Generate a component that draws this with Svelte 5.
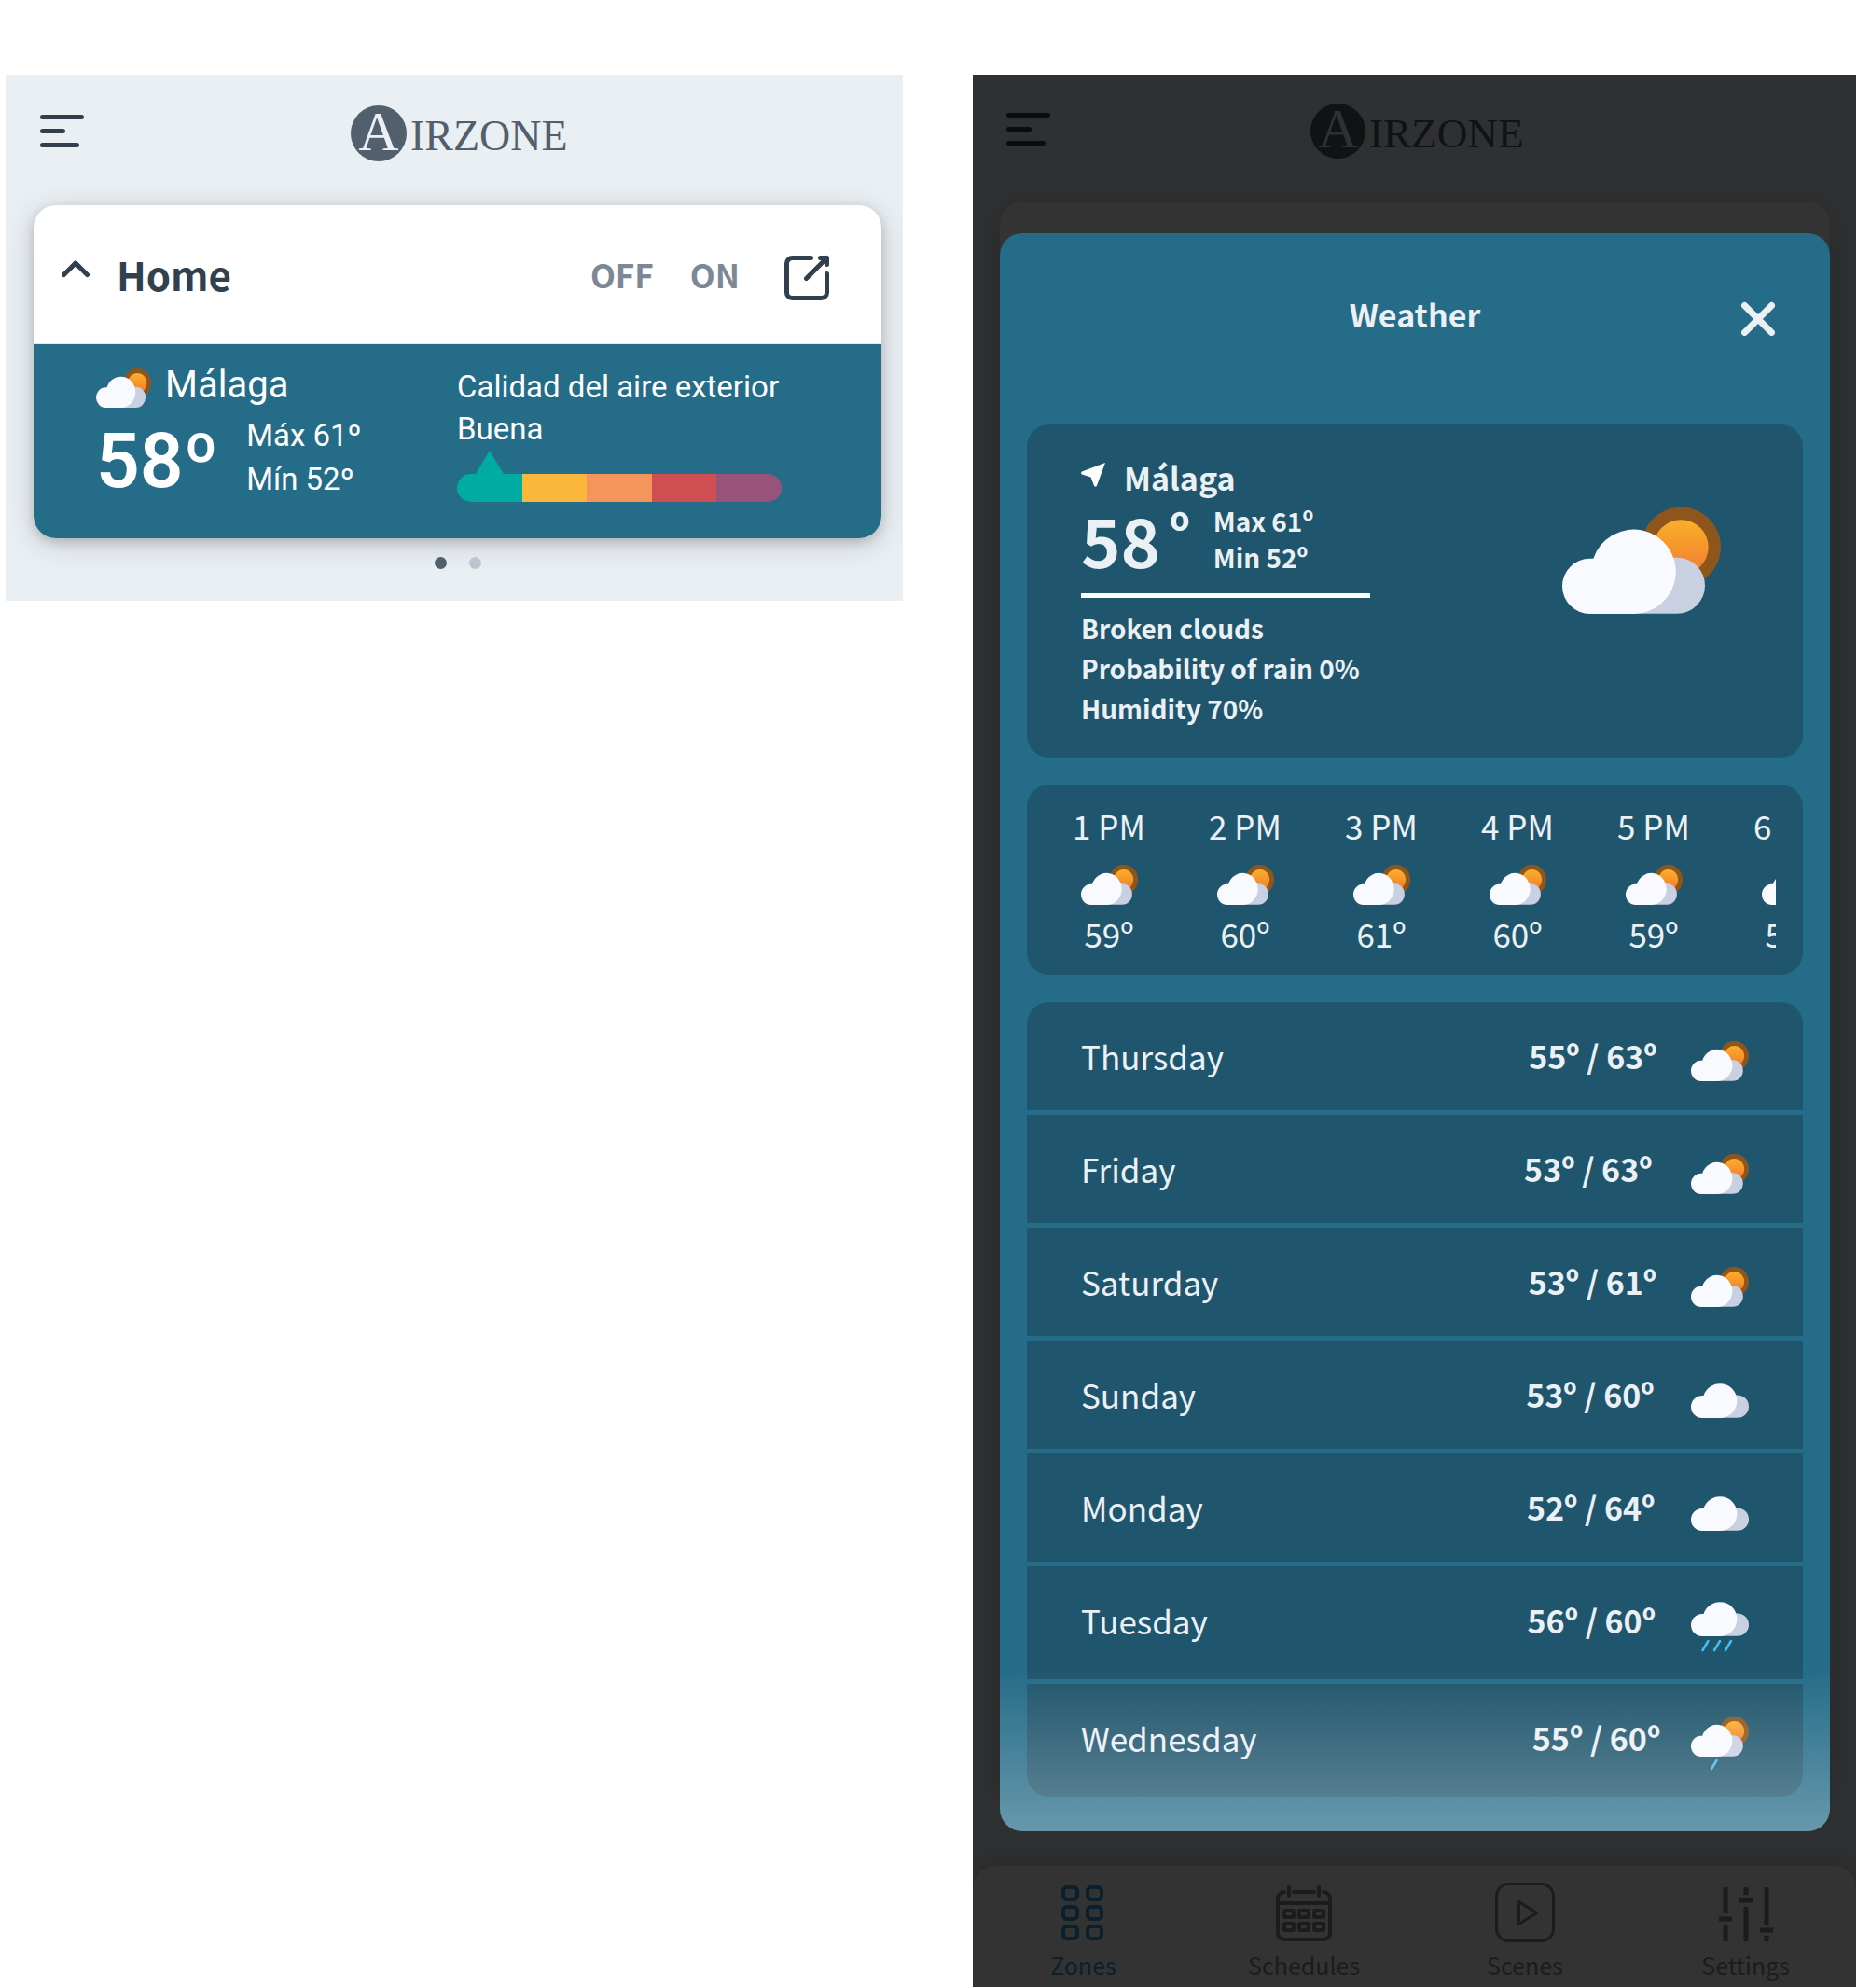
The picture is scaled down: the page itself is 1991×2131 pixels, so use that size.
<script>
  const hours = [
    { label: '1 PM', temp: '59º' },
    { label: '2 PM', temp: '60º' },
    { label: '3 PM', temp: '61º' },
    { label: '4 PM', temp: '60º' },
    { label: '5 PM', temp: '59º' },
    { label: '6 PM', temp: '58º' }
  ];

  const days = [
    { name: 'Thursday', temps: '55º / 63º', sky: 'partly' },
    { name: 'Friday', temps: '53º / 63º', sky: 'partly' },
    { name: 'Saturday', temps: '53º / 61º', sky: 'partly' },
    { name: 'Sunday', temps: '53º / 60º', sky: 'cloudy' },
    { name: 'Monday', temps: '52º / 64º', sky: 'cloudy' },
    { name: 'Tuesday', temps: '56º / 60º', sky: 'rain' },
    { name: 'Wednesday', temps: '55º / 60º', sky: 'showers' }
  ];

  const airLevels = ['good', 'fair', 'moderate', 'poor', 'bad'];
</script>

{#snippet menuIcon()}
  <svg class="menu-icon" viewBox="0 0 47 40" fill="none" stroke="currentColor" stroke-width="5" stroke-linecap="round" aria-hidden="true">
    <path d="M2.5 2.5h42M2.5 17.5h22M2.5 32.5h37" />
  </svg>
{/snippet}

{#snippet logo()}
  <svg class="logo" viewBox="0 0 232 60" role="img" aria-label="Airzone">
    <circle class="logo-disc" cx="30" cy="30" r="30" />
    <text class="logo-initial" x="30" y="48" text-anchor="middle">A</text>
    <text class="logo-word" x="64" y="48">IRZONE</text>
  </svg>
{/snippet}

{#snippet cloud()}
  <path fill="#c9d0e1" d="M229 162H369a90 90 0 0 1 0 180H229z" />
  <path fill="#f8faff" d="M89 165H100A136 136 0 1 1 229 343H89a89 89 0 0 1 0-178z" />
{/snippet}

{#snippet sunAndCloud()}
  <circle cx="382" cy="127" r="128" fill="#8f561c" />
  <circle cx="382" cy="128" r="88" fill="url(#sun)" />
  {@render cloud()}
{/snippet}

{#snippet partlyCloudy(cls)}
  <svg class={cls} viewBox="0 0 510 343" preserveAspectRatio="none" aria-hidden="true">{@render sunAndCloud()}</svg>
{/snippet}

{#snippet skyIcon(sky)}
  {#if sky === 'partly'}
    <svg class="sky" viewBox="0 0 62 64" aria-hidden="true">
      <svg y="16" width="62" height="43" viewBox="0 0 510 343" preserveAspectRatio="none">{@render sunAndCloud()}</svg>
    </svg>
  {:else if sky === 'cloudy'}
    <svg class="sky" viewBox="0 0 62 64" aria-hidden="true">
      <svg y="20" width="62" height="37" viewBox="0 70 459 273">{@render cloud()}</svg>
    </svg>
  {:else if sky === 'rain'}
    <svg class="sky wet" viewBox="0 0 62 69" aria-hidden="true">
      <svg y="12" width="62" height="37" viewBox="0 70 459 273">{@render cloud()}</svg>
      <path class="drops" d="M18.500 54l-6 10M31 54l-6 10M43 54l-6 10" />
    </svg>
  {:else}
    <svg class="sky wet" viewBox="0 0 62 69" aria-hidden="true">
      <svg y="9" width="62" height="43" viewBox="0 0 510 343" preserveAspectRatio="none">{@render sunAndCloud()}</svg>
      <path class="drops" d="M27.500 56l-5.500 9" />
    </svg>
  {/if}
{/snippet}

<svg class="defs" width="0" height="0" aria-hidden="true">
  <defs>
    <linearGradient id="sun" x1="0" y1="0" x2="0" y2="1">
      <stop offset="0" stop-color="#fbb02a" />
      <stop offset="1" stop-color="#f17a30" />
    </linearGradient>
  </defs>
</svg>

<main class="page">
  <section class="screen home">
    <header class="topbar">
      <button class="plain" aria-label="Menu">{@render menuIcon()}</button>
      {@render logo()}
    </header>

    <article class="card">
      <div class="card-head">
        <button class="plain" aria-label="Collapse">
          <svg class="chevron" viewBox="0 0 30 31" fill="none" stroke="currentColor" stroke-width="5" stroke-linecap="round" stroke-linejoin="round" aria-hidden="true">
            <path d="M2.500 15.500L15 3l12.500 12.500" />
          </svg>
        </button>
        <h1>Home</h1>
        <div class="power">
          <button class="plain">OFF</button>
          <button class="plain">ON</button>
        </div>
        <button class="plain" aria-label="Open">
          <svg class="open" viewBox="0 0 48 56" fill="none" stroke="currentColor" stroke-width="5" stroke-linecap="round" stroke-linejoin="round" aria-hidden="true">
            <path d="M28.500 10.500H8.500a6 6 0 0 0-6 6v31a6 6 0 0 0 6 6h31a6 6 0 0 0 6-6V27.500" />
            <path d="M38.500 10.500h7v7M45.500 10.500L23.500 32.500" />
          </svg>
        </button>
      </div>

      <div class="summary">
        <div>
          <div class="place">
            {@render partlyCloudy('place-icon')}
            <span>Málaga</span>
          </div>
          <div class="now">
            <strong>58º</strong>
            <div class="range">
              <div>Máx 61º</div>
              <div>Mín 52º</div>
            </div>
          </div>
        </div>
        <div class="air">
          <div>Calidad del aire exterior</div>
          <div>Buena</div>
          <div class="gauge">
            <svg class="marker" viewBox="0 0 30 25" aria-hidden="true"><path d="M15 0l15 25H0z" fill="#00aba2" /></svg>
            <div class="scale">
              {#each airLevels as level}
                <span class={level}></span>
              {/each}
            </div>
          </div>
        </div>
      </div>
    </article>

    <div class="dots">
      <span class="dot current"></span>
      <span class="dot"></span>
    </div>
  </section>

  <section class="screen phone">
    <div class="behind">
      <header class="topbar">
        <button class="plain" aria-label="Menu">{@render menuIcon()}</button>
        {@render logo()}
      </header>
      <div class="dim-card"></div>
      <nav>
        <a class="active" href="#zones">
          <svg viewBox="0 0 64 66" fill="none" stroke="currentColor" stroke-width="4" aria-hidden="true">
            {#each [6, 27, 48] as y}
              <rect x="11" {y} width="15" height="13" rx="4" />
              <rect x="37" {y} width="15" height="13" rx="4" />
            {/each}
          </svg>
          Zones
        </a>
        <a href="#schedules">
          <svg viewBox="0 0 64 66" fill="none" stroke="currentColor" stroke-width="4" stroke-linecap="round" aria-hidden="true">
            <path d="M11 11a7 7 0 0 0-7 7v37a7 7 0 0 0 7 7h42a7 7 0 0 0 7-7V18a7 7 0 0 0-7-7M21 11h22M16 6v9M48 6v9M4 23h56" />
            {#each [31, 45] as y}
              {#each [11, 27, 43] as x}
                <rect {x} {y} width="10" height="7" rx="1" />
              {/each}
            {/each}
          </svg>
          Schedules
        </a>
        <a href="#scenes">
          <svg viewBox="0 0 64 66" fill="none" stroke="currentColor" stroke-width="3" stroke-linejoin="round" aria-hidden="true">
            <rect x="1.500" y="2.500" width="61" height="61" rx="13" />
            <path d="M25.500 21.500v24l19-12z" />
          </svg>
          Scenes
        </a>
        <a href="#settings">
          <svg viewBox="0 0 64 66" fill="none" stroke="currentColor" stroke-width="5" aria-hidden="true">
            <path d="M10 6v28M10 46v18M3 40h14M32 6v8M32 27v37M25 20h14M54 6v40M54 58v6M47 52h14" />
          </svg>
          Settings
        </a>
      </nav>
    </div>

    <div class="modal" role="dialog" aria-labelledby="weather-title">
      <header class="modal-head">
        <h2 id="weather-title">Weather</h2>
        <button class="plain close" aria-label="Close">
          <svg viewBox="0 0 36 46" fill="none" stroke="currentColor" stroke-width="7" stroke-linecap="round" aria-hidden="true">
            <path d="M3.500 13.500l29 29M32.500 13.500l-29 29" />
          </svg>
        </button>
      </header>

      <section class="panel current-weather">
        <div class="details">
          <div class="where">
            <svg viewBox="0 0 26 32" aria-hidden="true"><path fill="#fff" d="M26 0L17 24.500q-1.500 2.500-3 0L10.500 15.500 1 12.500q-2-1.500 0-3z" /></svg>
            <span>Málaga</span>
          </div>
          <div class="reading">
            <span class="value">58</span>
            <span class="degree">º</span>
            <div class="limits">
              <div>Max 61º</div>
              <div>Min 52º</div>
            </div>
          </div>
          <hr />
          <p>Broken clouds</p>
          <p>Probability of rain 0%</p>
          <p>Humidity 70%</p>
        </div>
        {@render partlyCloudy('big-icon')}
      </section>

      <section class="panel hourly">
        <ul>
          {#each hours as hour}
            <li>
              <span>{hour.label}</span>
              {@render partlyCloudy('hour-icon')}
              <span>{hour.temp}</span>
            </li>
          {/each}
        </ul>
      </section>

      <ul class="daily">
        {#each days as day}
          <li>
            <span class="day">{day.name}</span>
            <span class="temps">{day.temps}</span>
            {@render skyIcon(day.sky)}
          </li>
        {/each}
      </ul>
    </div>
  </section>
</main>

<style>
  :global(body) {
    margin: 0;
    background: #fff;
  }

  .page {
    display: grid;
    grid-template-columns: 962fr 947fr;
    align-items: start;
    gap: 75px;
    padding: 80px 1px 1px 6px;
    font-family: 'Noto Sans CJK SC', 'Noto Sans', sans-serif;
  }

  .defs {
    position: absolute;
  }

  svg {
    display: block;
    flex: none;
  }

  h1, h2, p, ul {
    margin: 0;
    padding: 0;
    list-style: none;
  }

  .plain {
    display: block;
    padding: 0;
    border: 0;
    background: none;
    color: inherit;
    font: inherit;
    cursor: pointer;
  }

  .screen {
    overflow: hidden;
    min-width: 0;
  }

  /* Top bar */
  .topbar {
    display: grid;
    grid-template-columns: 1fr auto 1fr;
    align-items: center;
    justify-items: start;
    padding: 33px 27px 47px 37px;
    color: #323f4d;
  }

  .menu-icon {
    width: 47px;
    height: 40px;
  }

  .logo {
    width: 232px;
    height: 60px;
    fill: #525f6d;
    font-family: 'Liberation Serif', serif;
    overflow: visible;
  }

  .logo-initial {
    fill: #ebf0f4;
    font-size: 60px;
  }

  .logo-word {
    font-size: 46px;
  }

  /* Home screen */
  .home {
    background: #eaeff3;
  }

  .card {
    margin: 0 23px 0 30px;
    border-radius: 24px;
    background: #fff;
    box-shadow: 0 6px 32px rgba(0, 0, 0, 0.16), 0 4px 12px rgba(0, 0, 0, 0.16);
    overflow: hidden;
  }

  .card-head {
    display: flex;
    align-items: center;
    height: 148px;
    padding: 0 56px 0 30px;
    border-bottom: 1px solid #e4e8ea;
    color: #323f4d;
  }

  .chevron {
    width: 30px;
    height: 31px;
  }

  h1 {
    flex: 1;
    margin-left: 29px;
    font-size: 42px;
    font-weight: 700;
    line-height: 60px;
  }

  .power {
    display: flex;
    gap: 39px;
    margin-right: 48px;
    color: #7c8895;
    font-size: 35px;
    font-weight: 700;
    line-height: 44px;
  }

  .open {
    width: 48px;
    height: 56px;
  }

  .summary {
    display: grid;
    grid-template-columns: 387fr 348fr;
    padding: 19px 107px 39px 67px;
    background: #256c88;
    color: #fff;
    font-family: Roboto, sans-serif;
    font-size: 33px;
  }

  .place {
    display: flex;
    align-items: center;
    gap: 15px;
    font-size: 40px;
    line-height: 50px;
  }

  .place-icon {
    width: 59px;
    height: 42px;
    padding-top: 5px;
  }

  .now {
    display: flex;
    align-items: flex-end;
    gap: 30px;
    margin-top: 5px;
  }

  .now strong {
    font-size: 82px;
    font-weight: 600;
    line-height: 86px;
  }

  .range {
    line-height: 47px;
  }

  .air {
    padding-top: 4px;
    line-height: 45px;
    white-space: nowrap;
  }

  .gauge {
    display: grid;
    grid-template-columns: repeat(5, 1fr);
    margin-top: 1px;
  }

  .marker {
    justify-self: center;
    width: 30px;
    height: 25px;
  }

  .scale {
    grid-column: 1 / -1;
    display: flex;
    height: 30px;
    border-radius: 15px;
    overflow: hidden;
  }

  .scale span {
    flex: 1;
  }

  .good { background: #00aba2; }
  .fair { background: #fbb73a; }
  .moderate { background: #f4965b; }
  .poor { background: #ce4f52; }
  .bad { background: #975379; }

  .dots {
    display: flex;
    justify-content: center;
    gap: 24px;
    padding: 20px 23px 34px 30px;
  }

  .dot {
    width: 13px;
    height: 13px;
    border-radius: 50%;
    background: #bcc5cf;
  }

  .dot.current {
    background: #525f6d;
  }

  /* Phone screen: dimmed app and the dialog share one grid cell */
  .phone {
    display: grid;
    background: #2f3032;
  }

  .behind,
  .modal {
    grid-area: 1 / 1;
  }

  .behind {
    display: flex;
    flex-direction: column;
  }

  .behind .topbar {
    padding: 31px 32px 46px 36px;
    color: #0a0c0f;
  }

  .behind .logo {
    width: 228px;
    height: 59px;
    fill: #101315;
  }

  .behind .logo-initial {
    fill: #2f3032;
  }

  .dim-card {
    flex: 1;
    margin: 0 28px 74px 29px;
    border-radius: 24px;
    background: #333;
    box-shadow: 0 6px 32px rgba(0, 0, 0, 0.16);
  }

  nav {
    display: grid;
    grid-template-columns: repeat(4, 1fr);
    padding: 17px 0 4px;
    border-radius: 24px 24px 0 0;
    background: #333;
    box-shadow: 0 0 32px rgba(0, 0, 0, 0.2);
  }

  nav a {
    display: flex;
    flex-direction: column;
    align-items: center;
    gap: 3px;
    color: #1a1c1e;
    font-size: 25px;
    line-height: 40px;
    text-decoration: none;
  }

  nav a.active {
    color: #09202d;
  }

  nav svg {
    width: 64px;
    height: 66px;
  }

  /* Weather dialog */
  .modal {
    position: relative;
    margin: 170px 28px 167px 29px;
    padding: 0 29px 37px;
    border-radius: 24px;
    background: #256c88;
    color: #ebf0f5;
    overflow: hidden;
  }

  .modal::after {
    content: '';
    position: absolute;
    inset: auto 0 0;
    height: 175px;
    background: linear-gradient(rgba(255, 255, 255, 0), rgba(255, 255, 255, 0.3));
    pointer-events: none;
  }

  .modal-head {
    display: grid;
    grid-template-columns: 1fr auto 1fr;
    align-items: center;
    padding: 64px 30px 95px;
  }

  h2 {
    grid-column: 2;
    font-size: 34px;
    font-weight: 700;
    line-height: 44px;
  }

  .close {
    justify-self: end;
  }

  .close svg {
    width: 36px;
    height: 46px;
  }

  .panel {
    margin-bottom: 29px;
    border-radius: 24px;
    background: #20566d;
  }

  .current-weather {
    display: flex;
    justify-content: space-between;
    align-items: flex-start;
    padding: 35px 88px 31px 58px;
    font-size: 28px;
    font-weight: 700;
  }

  .details {
    width: 310px;
    white-space: nowrap;
  }

  .where {
    display: flex;
    align-items: center;
    gap: 20px;
    font-size: 34px;
    line-height: 44px;
  }

  .where svg {
    width: 26px;
    height: 32px;
  }

  .reading {
    display: flex;
    align-items: center;
    margin-top: 4px;
  }

  .value {
    font-size: 72px;
    line-height: 80px;
  }

  .degree {
    align-self: flex-start;
    margin: 0 25px 0 10px;
    font-size: 52px;
    line-height: 62px;
  }

  .limits {
    line-height: 39px;
  }

  hr {
    height: 5px;
    margin: 18px 0 11px;
    border: 0;
    background: #fff;
  }

  p {
    line-height: 43px;
  }

  .big-icon {
    width: 170px;
    height: 114px;
    margin-top: 54px;
  }

  .hourly {
    padding: 22px 29px;
    font-size: 35px;
    line-height: 44px;
  }

  .hourly ul {
    display: flex;
    gap: 28px;
    overflow: hidden;
  }

  .hourly li {
    flex: none;
    display: flex;
    flex-direction: column;
    align-items: center;
    width: 118px;
  }

  .hour-icon {
    width: 61px;
    height: 43px;
    margin: 20px 0 9px;
  }

  .daily {
    display: grid;
    gap: 5px;
    border-radius: 24px;
    overflow: hidden;
    font-size: 35px;
    line-height: 64px;
  }

  .daily li {
    display: flex;
    align-items: flex-start;
    padding: 26px 58px;
    background: #20566d;
  }

  .day {
    flex: 9 1 auto;
  }

  .temps {
    flex: 1 1 auto;
    font-size: 34px;
    font-weight: 700;
  }

  .sky {
    width: 62px;
    height: 64px;
  }

  .sky.wet {
    height: 69px;
  }

  .drops {
    fill: none;
    stroke: #48bdf1;
    stroke-width: 2.5px;
    stroke-linecap: round;
  }
</style>
